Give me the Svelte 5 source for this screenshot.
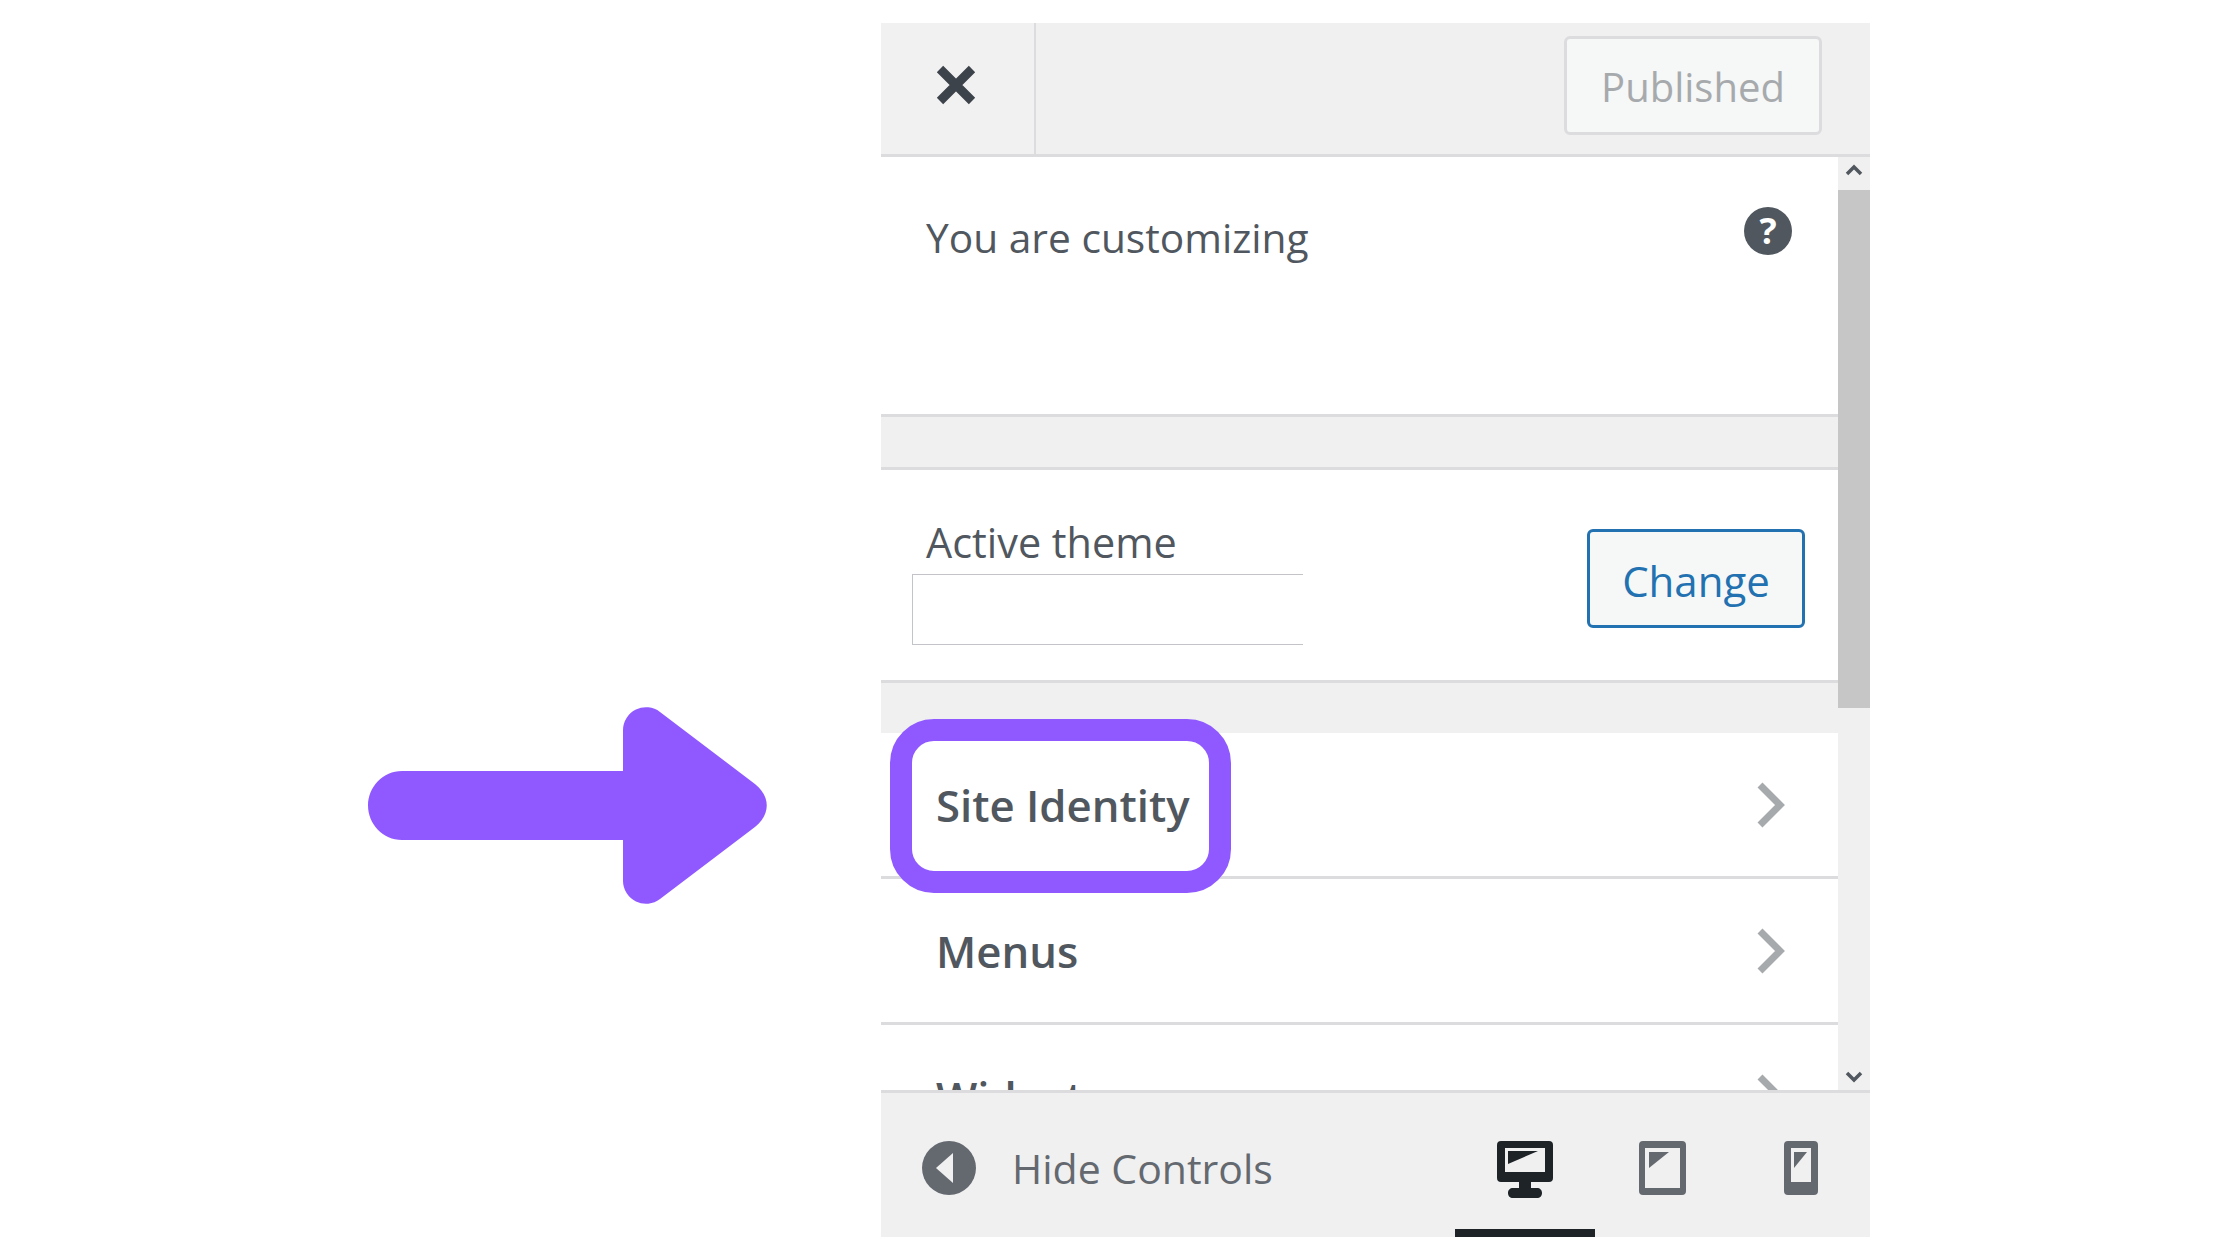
<script>
	let rows = ["Site Identity", "Menus", "Widgets"];
</script>

<main>
	<svg class="arrow" width="400" height="199" viewBox="0 0 400 199">
		<path d="M34 65H255V24A23 23 0 0 1 292 6L383 75C404 89 404 110 383 124L292 193A23 23 0 0 1 255 175V134H34C15 134 0 118 0 99.500C0 81 15 65 34 65Z" />
	</svg>
	<div class="highlight"></div>

	<div class="panel">
		<header class="top">
			<div class="close">
				<svg width="42" height="42" viewBox="0 0 42 42">
					<path d="M5 5 37 37M37 5 5 37" />
				</svg>
			</div>
			<div class="published">Published</div>
		</header>

		<div class="middle">
			<div class="scroll">
				<section class="info">
					<span>You are customizing</span>
					<div class="help">?</div>
				</section>
				<div class="gap first"></div>
				<section class="theme">
					<div class="themeName">
						<span>Active theme</span>
						<div class="themeBox"></div>
					</div>
					<div class="change">Change</div>
				</section>
				<div class="gap second"></div>
				{#each rows as row}
					<div class="row">
						<span>{row}</span>
						<svg width="30" height="48" viewBox="0 0 30 48">
							<path d="M5 4 25 24 5 44" />
						</svg>
					</div>
				{/each}
			</div>
			<div class="scrollbar">
				<div class="scrollBtn up">
					<svg width="18" height="12" viewBox="0 0 18 12"><path d="M2 10 9 3 16 10" /></svg>
				</div>
				<div class="track">
					<div class="thumb"></div>
				</div>
				<div class="scrollBtn down">
					<svg width="18" height="12" viewBox="0 0 18 12"><path d="M2 2 9 9 16 2" /></svg>
				</div>
			</div>
		</div>

		<footer class="bottom">
			<div class="hide">
				<svg width="54" height="54" viewBox="0 0 54 54">
					<circle cx="27" cy="27" r="27" />
					<path class="tri" d="M14 27 31 12V42Z" />
				</svg>
				<span>Hide Controls</span>
			</div>
			<div class="devices">
				<div class="device active">
					<svg width="56" height="57" viewBox="0 0 56 57">
						<path fill-rule="evenodd" d="M4 0H52A4 4 0 0 1 56 4V37A4 4 0 0 1 52 41H34V47H40C43 47 45 49 45 52S43 57 40 57H16C13 57 11 55 11 52S13 47 16 47H22V41H4A4 4 0 0 1 0 37V4A4 4 0 0 1 4 0ZM8 7V31H48V7Z" />
						<path d="M11 10H41L11 23Z" />
					</svg>
				</div>
				<div class="device tablet">
					<svg width="47" height="54" viewBox="0 0 47 54">
						<path fill-rule="evenodd" d="M4 0H43A4 4 0 0 1 47 4V50A4 4 0 0 1 43 54H4A4 4 0 0 1 0 50V4A4 4 0 0 1 4 0ZM6 7V47H41V7Z" />
						<path d="M10 11H30L10 27Z" />
					</svg>
				</div>
				<div class="device phone">
					<svg width="34" height="54" viewBox="0 0 34 54">
						<path fill-rule="evenodd" d="M4 0H30A4 4 0 0 1 34 4V50A4 4 0 0 1 30 54H4A4 4 0 0 1 0 50V4A4 4 0 0 1 4 0ZM7 7V41H27V7Z" />
						<path d="M10 11H23L10 27Z" />
					</svg>
				</div>
			</div>
		</footer>
	</div>
</main>

<style>
	:global(body) {
		background: #fff;
		font-family: "Open Sans", "Noto Sans", sans-serif;
	}
	main {
		position: relative;
		width: 2240px;
		height: 1260px;
		padding: 23px 0 0 881px;
		box-sizing: border-box;
		overflow: hidden;
	}
	.arrow {
		position: absolute;
		left: 368px;
		top: 706px;
	}
	.arrow path {
		fill: #8f59ff;
	}
	.highlight {
		position: absolute;
		left: 890px;
		top: 719px;
		width: 341px;
		height: 174px;
		box-sizing: border-box;
		border: 22px solid #8f59ff;
		border-radius: 44px;
		z-index: 2;
	}
	.panel {
		width: 989px;
		height: 1214px;
		display: flex;
		flex-direction: column;
		background: #f0f0f1;
		color: #50575e;
		font-size: 40px;
	}
	.top {
		height: 131px;
		flex: none;
		display: flex;
		align-items: flex-start;
		justify-content: space-between;
		border-bottom: 3px solid #dcdcde;
	}
	.close {
		width: 155px;
		height: 131px;
		box-sizing: border-box;
		display: flex;
		align-items: center;
		justify-content: center;
		padding: 0 3px 8px 0;
		background: #f1f1f1;
		border-right: 2px solid #dcdcde;
	}
	.close path {
		fill: none;
		stroke: #3c434a;
		stroke-width: 9;
	}
	.published {
		width: 258px;
		height: 99px;
		box-sizing: border-box;
		margin: 13px 48px 0 0;
		padding-top: 2px;
		display: flex;
		align-items: center;
		justify-content: center;
		background: #f6f7f7;
		border: 3px solid #dcdcde;
		border-radius: 6px;
		color: #a7aaad;
	}
	.middle {
		flex: 1;
		min-height: 0;
		display: flex;
	}
	.scroll {
		flex: 1;
		min-width: 0;
		overflow: hidden;
		background: #fff;
	}
	.info {
		height: 257px;
		box-sizing: border-box;
		padding: 53px 0 0 45px;
		display: flex;
		align-items: flex-start;
		justify-content: space-between;
		font-size: 40.700px;
		line-height: 54px;
	}
	.help {
		width: 48px;
		height: 48px;
		margin: -3px 46px 0 0;
		display: flex;
		align-items: center;
		justify-content: center;
		border-radius: 50%;
		background: #50575e;
		color: #fff;
		font-size: 36px;
		font-weight: 700;
		line-height: 48px;
	}
	.gap {
		background: #f0f0f1;
		border-top: 3px solid #dcdcde;
		box-sizing: border-box;
	}
	.first {
		height: 56px;
		border-bottom: 3px solid #dcdcde;
	}
	.second {
		height: 53px;
	}
	.theme {
		height: 210px;
		display: flex;
		justify-content: space-between;
		align-items: flex-start;
	}
	.themeName {
		padding: 45px 0 0 31px;
	}
	.themeName span {
		display: block;
		margin: 0 0 5px 14px;
		font-size: 41.400px;
		line-height: 54px;
	}
	.themeBox {
		width: 391px;
		height: 71px;
		box-sizing: border-box;
		border: 1px solid #c3c4c7;
		border-right: 0;
	}
	.change {
		width: 218px;
		height: 99px;
		box-sizing: border-box;
		margin: 59px 33px 0 0;
		padding-top: 3px;
		display: flex;
		align-items: center;
		justify-content: center;
		background: #f6f7f7;
		border: 3px solid #2271b1;
		border-radius: 6px;
		color: #2271b1;
		font-size: 42px;
	}
	.row {
		height: 146px;
		box-sizing: border-box;
		display: flex;
		align-items: center;
		justify-content: space-between;
		padding: 0 53px 0 55px;
		border-bottom: 3px solid #dcdcde;
		font-size: 43.700px;
		font-weight: 600;
	}
	.row path {
		fill: none;
		stroke: #a7aaad;
		stroke-width: 7;
	}
	.scrollbar {
		width: 32px;
		flex: none;
		display: flex;
		flex-direction: column;
		background: #f0f0f0;
	}
	.scrollBtn {
		height: 33px;
		flex: none;
		display: flex;
		justify-content: center;
		box-sizing: border-box;
	}
	.up {
		align-items: flex-start;
		padding-top: 7px;
	}
	.down {
		align-items: flex-end;
		padding-bottom: 7px;
	}
	.scrollBtn path {
		fill: none;
		stroke: #50575e;
		stroke-width: 3.500;
	}
	.track {
		flex: 1;
	}
	.thumb {
		height: 518px;
		background: #c6c6c6;
	}
	.bottom {
		height: 147px;
		flex: none;
		box-sizing: border-box;
		display: flex;
		align-items: flex-start;
		justify-content: space-between;
		border-top: 3px solid #dcdcde;
		padding-left: 41px;
	}
	.hide {
		display: flex;
		align-items: center;
		gap: 36px;
		height: 150px;
		color: #646970;
		font-size: 41px;
	}
	.hide circle {
		fill: #646970;
	}
	.tri {
		fill: #f0f0f1;
	}
	.devices {
		display: flex;
		height: 144px;
	}
	.device {
		height: 144px;
		box-sizing: border-box;
		padding-top: 48px;
		display: flex;
		justify-content: center;
	}
	.device svg {
		fill: #646970;
	}
	.active {
		width: 140px;
		margin-right: 35px;
		border-bottom: 8px solid #1d2327;
	}
	.active svg {
		fill: #1d2327;
	}
	.tablet {
		width: 64px;
		margin-right: 75px;
	}
	.phone {
		width: 64px;
		margin-right: 37px;
	}
</style>
